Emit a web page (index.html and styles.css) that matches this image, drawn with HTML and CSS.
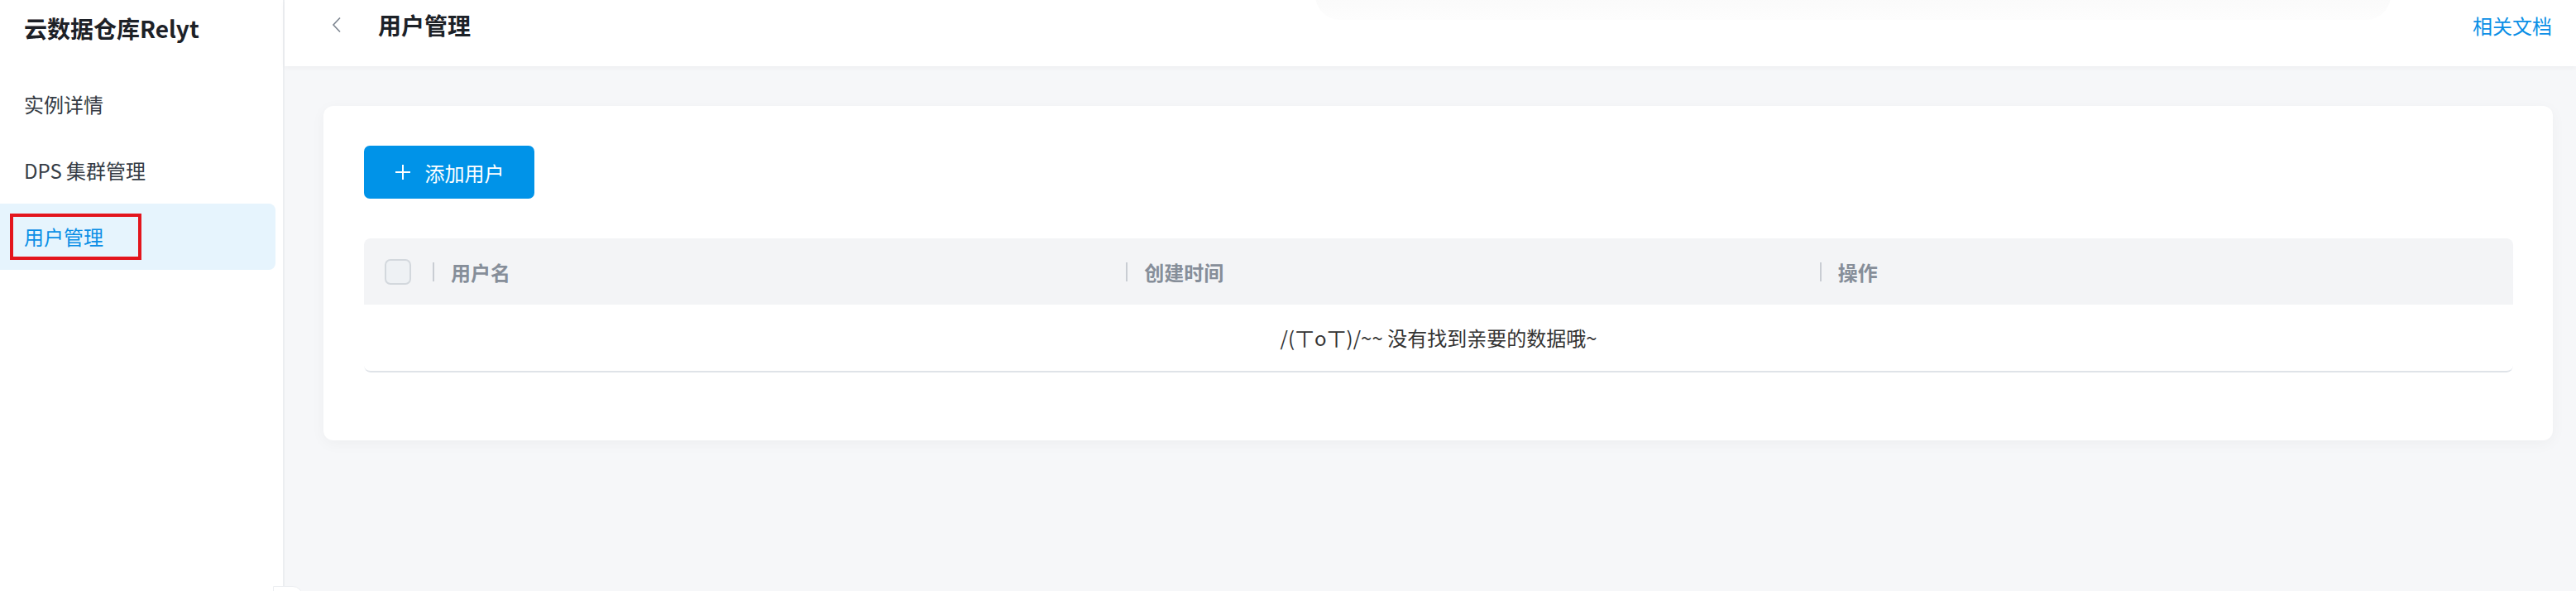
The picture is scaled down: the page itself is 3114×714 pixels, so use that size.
FILE: index.html
```html
<!DOCTYPE html>
<html lang="zh-CN">
    <head>
        <meta charset="UTF-8">
        <meta name="viewport" content="width=device-width, initial-scale=1.0">
        <title>用户管理 - 云数据仓库Relyt</title>
        <link rel="stylesheet" href="styles.css">
    </head>
    <body>
        <div class="layout">
            <div class="sidebar">
                <div class="brand">云数据仓库Relyt</div>
                <div class="menu">
                    <div class="menu-item">实例详情</div>
                    <div class="menu-item">DPS 集群管理</div>
                    <div class="menu-item active">
                        用户管理
                        <span class="highlight-box"></span>
                    </div>
                </div>
                <div class="collapse-tab"></div>
            </div>
            <div class="main">
                <div class="topbar">
                    <div class="popover-ghost"></div>
                    <div class="topbar-left">
                        <svg class="back" width="12" height="20" viewBox="0 0 12 20">
                            <polyline points="10,1.5 2,10 10,18.5" fill="none" stroke="#7d8590" stroke-width="1.6"/>
                        </svg>
                        <h1 class="page-title">用户管理</h1>
                    </div>
                    <a class="doc-link">相关文档</a>
                </div>
                <div class="content">
                    <div class="card">
                        <button class="btn-primary">
                            <svg width="20" height="20" viewBox="0 0 20 20">
                                <path d="M10 1v18M1 10h18" stroke="#fff" stroke-width="2"/>
                            </svg>
                            <span>添加用户</span>
                        </button>
                        <div class="table">
                            <div class="table-head">
                                <div class="th-check"><span class="checkbox"></span></div>
                                <div class="th">用户名</div>
                                <div class="th">创建时间</div>
                                <div class="th">操作</div>
                            </div>
                            <div class="table-empty">/(ㄒoㄒ)/~~ 没有找到亲要的数据哦~</div>
                        </div>
                    </div>
                </div>
            </div>
        </div>
    </body>
</html>
```

FILE: styles.css
```css
html, body {
    margin: 0;
    padding: 0;
    height: 100%;
    overflow: hidden;
}

body {
    font-family: "Noto Sans CJK SC", "Noto Sans", sans-serif;
    color: #333b45;
    background: #f6f7f9;
}

.layout {
    display: flex;
    height: 100%;
}

/* left navigation */
.sidebar {
    position: relative;
    width: 342px;
    flex-shrink: 0;
    background: #fff;
    border-right: 2px solid #eceef1;
}

.brand {
    height: 68px;
    line-height: 68px;
    padding-left: 29px;
    font-size: 28px;
    font-weight: 700;
    color: #1d2127;
}

.menu {
    padding-top: 18px;
    padding-right: 9px;
}

.menu-item {
    position: relative;
    height: 80px;
    line-height: 80px;
    padding-left: 29px;
    font-size: 24px;
    color: #353c45;
}

.menu-item.active {
    background: #e6f4fd;
    color: #0a8fe6;
    border-radius: 0 8px 8px 0;
}

.highlight-box {
    position: absolute;
    left: 12px;
    top: 12px;
    width: 159px;
    height: 56px;
    box-sizing: border-box;
    border: 4px solid #e3151d;
}

.collapse-tab {
    position: absolute;
    left: 330px;
    top: 708px;
    width: 34px;
    height: 20px;
    background: #fff;
    border: 1px solid #eceef1;
    border-radius: 0 12px 0 0;
}

/* main area */
.main {
    flex: 1;
    display: flex;
    flex-direction: column;
    background: #f6f7f9;
}

.topbar {
    position: relative;
    height: 80px;
    box-sizing: border-box;
    padding: 0 29px 20px 57px;
    background: #fff;
    display: flex;
    align-items: center;
    justify-content: space-between;
    box-shadow: 0 2px 6px rgba(0, 0, 0, 0.04);
    z-index: 1;
}

/* faint trace of a popover hanging above the viewport */
.popover-ghost {
    position: absolute;
    left: 1246px;
    top: -60px;
    width: 1300px;
    height: 84px;
    background: linear-gradient(#f9f9f9 55%, #fdfdfd);
    border-radius: 0 0 30px 30px;
}

.topbar-left {
    position: relative;
    display: flex;
    align-items: center;
    gap: 44px;
}

.back {
    display: block;
}

.page-title {
    margin: 0;
    font-size: 28px;
    font-weight: 700;
    color: #1c2127;
}

.doc-link {
    position: relative;
    font-size: 24px;
    color: #0a8fe6;
    cursor: pointer;
}

.content {
    padding: 48px 28px 0 47px;
}

.card {
    height: 404px;
    box-sizing: border-box;
    padding: 48px 48px 0 49px;
    background: #fff;
    border-radius: 12px;
    box-shadow: 0 4px 18px rgba(0, 0, 0, 0.04);
}

.btn-primary {
    display: flex;
    align-items: center;
    justify-content: center;
    gap: 17px;
    width: 206px;
    height: 64px;
    padding: 0;
    border: none;
    border-radius: 7px;
    background: #0093e8;
    color: #fff;
    font-family: inherit;
    font-size: 24px;
}

.table {
    margin-top: 48px;
    border-radius: 8px;
    overflow: hidden;
}

.table-head {
    display: grid;
    grid-template-columns: 83px repeat(3, 1fr);
    height: 80px;
    background: #f3f4f6;
}

.th-check {
    display: flex;
    align-items: center;
    padding-left: 25px;
}

.checkbox {
    width: 32px;
    height: 31px;
    box-sizing: border-box;
    border: 2px solid #d3d8dd;
    border-radius: 7px;
    background: #eef1f4;
}

.th {
    display: flex;
    align-items: center;
    font-size: 24px;
    font-weight: 700;
    color: #868e99;
}

.th::before {
    content: "";
    width: 2px;
    height: 23px;
    margin-right: 20px;
    background: #c9cdd3;
}

.table-empty {
    height: 82px;
    box-sizing: border-box;
    line-height: 80px;
    text-align: center;
    font-size: 24px;
    color: #333;
    border-bottom: 2px solid #dfe3e8;
    border-radius: 0 0 8px 8px;
}
```
